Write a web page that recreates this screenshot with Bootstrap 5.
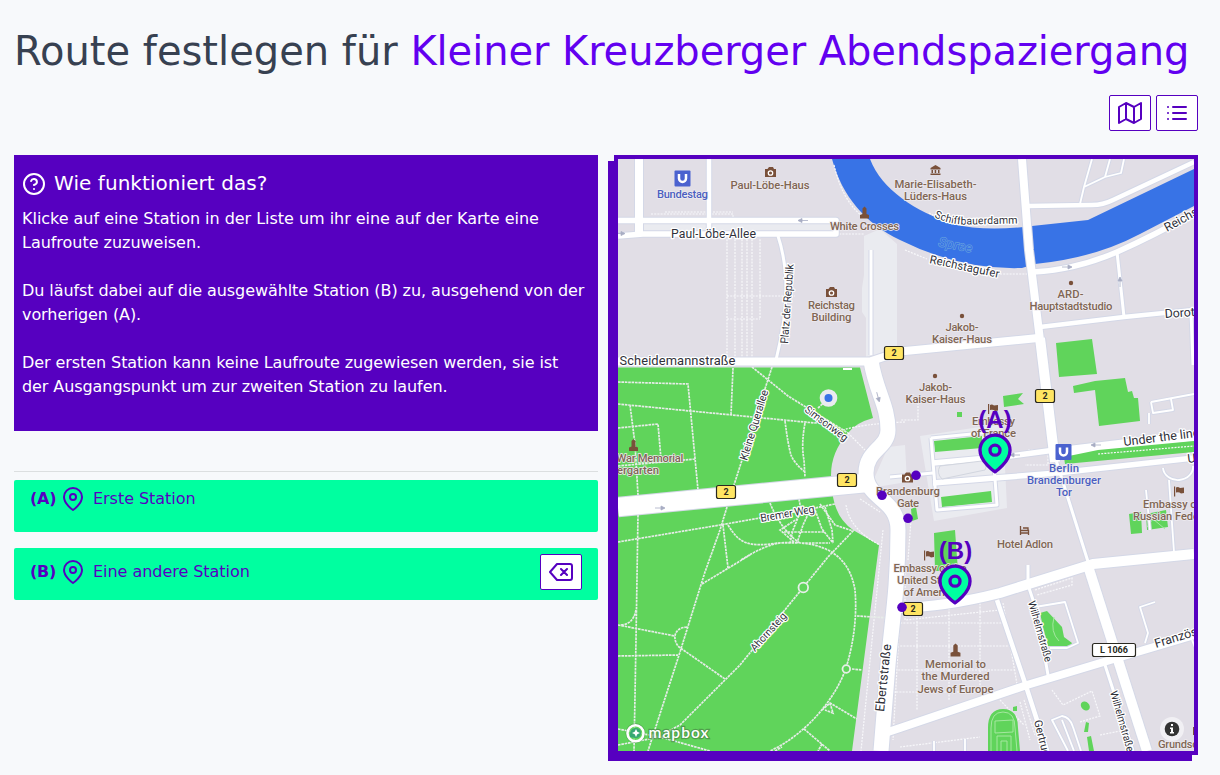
<!DOCTYPE html>
<html lang="de">
<head>
<meta charset="utf-8">
<meta name="viewport" content="width=device-width, initial-scale=1">
<title>Route festlegen</title>
<link rel="stylesheet" href="https://cdn.jsdelivr.net/npm/bootstrap@5.3.0/dist/css/bootstrap.min.css">
<style>
:root{--violet:#5600c0;--mint:#00ffa0}
body{background:#f7f9fb;font-family:"DejaVu Sans",sans-serif;color:#374151;font-size:16px;line-height:24px;min-height:100vh}
.page-wrap{padding:26px 22px 20px 14px}
h1{font-size:40px;line-height:50px;font-weight:400;white-space:nowrap;color:#374151;margin:0 0 19px}
h1 span{color:#6200f0;letter-spacing:-.08px}
.icon{width:24px;height:24px;fill:none;stroke:currentColor;stroke-width:2;stroke-linecap:round;stroke-linejoin:round;flex:none;display:block}
.icon-btn{width:42px;height:36px;border:1px solid var(--violet);border-radius:2px;color:var(--violet);background:#fff;padding:0}
.tools{gap:5px;margin-bottom:24px}
.halves{display:grid;grid-template-columns:584px 584px;gap:16px}
.help{background:var(--violet);color:#fff;height:276px;padding:16px 8px}
.help h2{font-size:20px;line-height:24px;font-weight:400;margin-bottom:11px;letter-spacing:.06px}
.help p{margin-bottom:24px;letter-spacing:-.08px}
.help p:first-of-type{letter-spacing:-.03px}
.stations{border-top:1px solid #dcdfe0;margin-top:40px;padding-top:8px}
.station{background:var(--mint);color:var(--violet);border-radius:2px;height:52px;padding:6px 16px;margin-bottom:16px}
.station b{width:27px;padding-top:1px;letter-spacing:-.2px}
.station span{padding-top:1px;letter-spacing:-.04px}
.mapframe{height:600px;border:4px solid var(--violet);box-shadow:-6px 6px 0 var(--violet);background:#e1dee6}
.mapframe>svg{display:block}
.roads path{fill:none;stroke-width:calc(var(--w) + var(--edge,0px));stroke-linejoin:round}
.w2{--w:1.8px}.w3{--w:3px}.w4{--w:4.5px}.w5{--w:5.5px}.w8{--w:8px}.w10{--w:10px}.w15{--w:15px}.w19{--w:18.5px}
.trail{fill:none;stroke:#e6ece8;stroke-width:1.7;stroke-dasharray:2.6 .8}
.foot{fill:none;stroke:#f8f8fb;stroke-width:1.2;stroke-dasharray:2 1.2}
.grass{fill:#60d45b}
text{font-family:Roboto,"Open Sans",sans-serif}
.poi text{font-size:11.3px;font-weight:500;fill:#806654;stroke:#eeebf0;stroke-width:1.4;paint-order:stroke;text-anchor:middle}
.poi .ubahn{fill:#4b5fc0}
.street text{font-size:12.3px;fill:#30313a;stroke:#fff;stroke-width:2.5;paint-order:stroke;stroke-linejoin:round}
.shield rect{fill:#ffe563;stroke:#292820;stroke-width:1.2}
.shield text{font-size:9px;font-weight:700;fill:#292820;text-anchor:middle}
.pins text{font:700 24px "Liberation Sans",sans-serif;fill:var(--violet);text-anchor:middle}
</style>
</head>
<body>
<main class="page-wrap">
<h1>Route festlegen für <span>Kleiner Kreuzberger Abendspaziergang</span></h1>
<div class="tools d-flex justify-content-end">
<button class="icon-btn d-flex align-items-center justify-content-center" aria-label="Karte"><svg class="icon" viewBox="0 0 24 24"><path d="M1 6v16l7-4 8 4 7-4V2l-7 4-8-4-7 4zM8 2v16M16 6v16"/></svg></button>
<button class="icon-btn d-flex align-items-center justify-content-center" aria-label="Liste"><svg class="icon" viewBox="0 0 24 24"><path d="M8 6h13M8 12h13M8 18h13M3 6h.01M3 12h.01M3 18h.01"/></svg></button>
</div>
<div class="halves">
<section>
<div class="help">
<h2 class="d-flex gap-2"><svg class="icon" style="margin-top:1px" viewBox="0 0 24 24"><circle cx="12" cy="12" r="10"/><path d="M9.09 9a3 3 0 0 1 5.83 1c0 2-3 3-3 3M12 17h.01"/></svg>Wie funktioniert das?</h2>
<p>Klicke auf eine Station in der Liste um ihr eine auf der Karte eine Laufroute zuzuweisen.</p>
<p>Du läufst dabei auf die ausgewählte Station (B) zu, ausgehend von der vorherigen (A).</p>
<p class="mb-0">Der ersten Station kann keine Laufroute zugewiesen werden, sie ist<br>der Ausgangspunkt um zur zweiten Station zu laufen.</p>
</div>
<div class="stations">
<div class="station d-flex align-items-start"><b class="me-1">(A)</b><svg class="icon me-2" style="margin-top:1px" viewBox="0 0 24 24"><path d="M21 10c0 7-9 13-9 13s-9-6-9-13a9 9 0 0 1 18 0z"/><circle cx="12" cy="10" r="3"/></svg><span>Erste Station</span></div>
<div class="station d-flex align-items-start"><div class="d-flex flex-fill" style="padding-top:5px"><b class="me-1">(B)</b><svg class="icon me-2" style="margin-top:1px" viewBox="0 0 24 24"><path d="M21 10c0 7-9 13-9 13s-9-6-9-13a9 9 0 0 1 18 0z"/><circle cx="12" cy="10" r="3"/></svg><span>Eine andere Station</span></div><button class="icon-btn d-flex align-items-center justify-content-center" aria-label="Route löschen"><svg class="icon" viewBox="0 0 24 24"><path d="M21 4H8l-7 8 7 8h13a2 2 0 0 0 2-2V6a2 2 0 0 0-2-2zM18 9l-6 6M12 9l6 6"/></svg></button></div>
</div>
</section>
<section class="mapframe">
<svg width="576" height="592" viewBox="618 159 576 592">
<defs>
<g id="roadnet" class="roads">
<path class="w8" d="M639 159V236"/><path class="w4" d="M709 159V234"/>
<path class="w5" d="M618 220.5H836V234H643L618 236"/>
<path class="w3" d="M778 236Q786 260 786 290T776 360M871 250V355M931 438L937 510 997 505 992 440"/>
<path class="w3" d="M931 438L992 432"/>
<path class="w8" d="M618 361.5H870L900 351.500 1038 338"/>
<path class="w8" d="M1022 159L1029 250 1040 340"/><path class="w10" d="M1040 338L1055 462"/>
<path class="w3" d="M1056 460L1090 568M1117 252L1124 317M1191 312L1193 365"/>
<path class="w4" d="M1028 206L1092 205Q1103 205 1113 200L1194 162"/>
<path class="w2" d="M1092 159L1084 187 1080 204M1084 187L1105 177 1121 173 1124 159M1110 159L1105 177"/>
<path class="w5" d="M1033 272Q1075 270 1117 252 1155 235 1194 213"/>
<path class="w4" d="M1040 327L1124 317 1194 310"/>
<path class="w5" d="M933 463L1010 456 1055 450M933 483L995 478 1057 473 1194 458"/>
<path class="w10" d="M1052 453L1194 436"/>
<path class="w19" d="M618 507L866 483"/>
<path class="w15" d="M871 361C876 392 888 405 888 430 888 448 866 450 866 473 866 500 898 498 898 530 898 590 892 620 888 665L881 751"/>
<path class="w10" d="M898 608Q945 607 1000 593L1093 564 1194 554"/>
<path class="w10" d="M1088 566L1147 751"/><path class="w8" d="M885 733L900 728 1027 685 1117 658 1194 635"/>
<path class="w4" d="M997 600L1025 683 1047 751"/>
<path class="w3" d="M1028 565V585L1037 612 1048 675M1105 665L1133 751M933 473L890 477"/>
<path class="w2" d="M1035 607L1065 602 1078 643 1067 648H1050M1155 602L1140 607 1148 633 1145 643M1068 751L1052 720 1062 716Q1070 717 1073 727L1081 751M1062 720L1074 751M1192 640L1196 650M1151 402L1194 394M1151 402L1153 413 1173 410 1171 399M1149 424V413M1163 468A15 13 0 0 0 1193 466M1146 490L1150 530M1169 480L1174 552M934 741V751M965 739V751"/>
</g>
<g id="camera" fill="#79503a"><path d="M-5.500-3h2.500l1.500-2h4l1 2h2v8h-11z"/><circle r="2.200" cy="1" fill="#79503a" stroke="#fff" stroke-width="1.300"/></g>
<path id="monument" fill="#79503a" d="M-4.500 6V2.500l2.500-1V-4L0-6 2-4v5.500l2.500 1V6z"/>
<path id="flag" fill="#79503a" d="M-5-5h1.200v10H-5zM-3-4Q-1-5 1-3.500L5-4V1.500L2 2Q0 0-3 1z"/>
<g id="ub"><rect x="-8" y="-8" width="16" height="16" rx="1" fill="#4b62cf"/><path d="M-3.500-4.500V0a3.500 3.500 0 0 0 7 0V-4.500" fill="none" stroke="#fff" stroke-width="2.500"/></g>
<path id="arr" d="M-5 0H4M1-2L5 0 1 2z" fill="#a8adc4" stroke="#a8adc4" stroke-width=".8"/>
<path id="quay" d="M934 217Q950 225 968 224.500L1016 223.500"/>
<g id="pin"><path d="M21 10c0 7-9 13-9 13s-9-6-9-13a9 9 0 0 1 18 0z" fill="#00ffa0" stroke="#5600c0" stroke-width="2" stroke-linejoin="round"/><circle cx="12" cy="10" r="3" fill="none" stroke="#5600c0" stroke-width="2"/></g>
</defs>
<!-- ground areas -->
<path fill="#eaebf0" d="M643 222H836V232H643zM864 236L880 229 897 244V350L866 357V318L862 312V288L864 275zM920 436L980 427 1003 425 1007 508 934 521 928 485zM888 447L905 445 907 482 870 488z"/>
<path fill="#3873e6" d="M832 159C842 196 865 223 900 240Q960 270 1022 268L1035 264Q1095 258 1140 234L1194 206V169L1088 220 1032 226Q985 232 953 224C915 211 882 190 870 159z"/>
<path class="grass" d="M618 367.500H860L873 418Q855 423 848 433 831 452 831 475L833 497Q837 519 853 530L879 545 852 751H618z"/>
<g class="foot"><path d="M651 214H733V223M665 212H733M727 236V361M735 236V361M742 236V361M747 236V361M752 236V361M760 236V319M727 296H795M727 319H760M836 234H864M834 165Q842 200 862 216M905 250L927 259M929 213Q960 229 1020 222M1000 274H1030M848 433L865 450M843 430Q862 424 905 422M860 499L880 512M846 505Q850 530 880 545M883 530L861 751M903 560L893 740M905 570V620L1000 610M897 623H1008M897 646H1010M895 670H1015M893 692H1018M917 605V710M949 605V700M980 600V690M1003 603L1018 690M1035 590L1072 578V585L1037 595M1052 690L1063 705 1092 691 1100 716 1080 722M900 747L980 737M1000 700L1024 725M908 400H918V420H900M1028 450H1048V465H1025M911 520L908 560M1020 702L1030 740M1024 700L1035 735M1100 735L1125 730 1130 751"/></g>
<g class="grass"><path d="M934 441L982 436V448L935 452zM941 497L991 491 992 502 942 507zM1056 343L1092 339 1097 374 1059 377zM1073 386L1095 381 1125 378 1128 392 1132 391 1134 398 1138 398 1140 421 1099 426 1095 390 1074 393zM1003 396L1023 393 1018 399 1024 404 1004 407zM957 412h5v5h-5zM1129 514L1141 512 1142 533 1131 534zM1146 514L1166 510 1168 527 1147 530zM934 533L955 530 958 571 935 571zM911 509L916 507 918 519 912 521zM1040 613L1047 611 1062 627 1064 637 1072 643 1070 647 1048 646 1043 627zM1013 707L1017 706V711L1013 711zM1086 722L1089 723 1088 732 1084 732zM1087 737L1091 736 1094 751H1089z"/><ellipse cx="1085.300" cy="706" rx="5" ry="4" transform="rotate(45 1085.300 706)"/><path d="M988 751V728Q988 709 1003 709T1018 728L1020 751z"/></g>
<path d="M991 751V728Q991 712 1003 712T1015 728L1017 751M995 721L1013 720V732L995 733zM997 751V736H1011V751M1001 751V741H1007V751M1054 617Q1050 632 1059 641M1147 527L1153 519 1165 529" fill="none" stroke="#a5e7a0"/>
<g class="trail"><path d="M618 382L688 384 698 490M618 404L732 415 815 423 828 420M733 368L731 415M630 405L635 444 638 495M618 428L658 424 661 459M618 466L695 459M772 367L734 485M752 367L788 396 848 433M785 421Q788 445 791 455 794 463 805 472M805 423Q801 445 804 460L805 477M818 408L828 399M638 515L636 640 634 751M618 542L720 525 805 510 835 504M727 507L720 530 705 572 680 652 648 751M723 525L728 568M728 525C740 545 750 547 778 543 830 539 850 560 855 590 858 625 850 655 846 668 835 700 805 735 770 751M741 560Q765 545 780 543H830M770 503C778 523 790 537 800 543M799 499L801 510 793 530 790 543M825 507L832 530 833 543M820 504L835 525 853 531 828 557 740 665 680 725 665 733M784 532H825M794 542L780 530 797 519M814 507L822 529 833 543M702 584L750 555M618 625L675 636M618 656L678 655M636 610Q633 625 620 625M687 627C672 628 673 641 679 647L725 679M618 729L660 737 710 751M618 745L665 736M822 710L830 703 857 719M830 703L833 713 825 710M804 729L830 751M822 744L818 751M857 616L890 618M852 669L862 670M810 510L803 525 797 543M775 751L782 747"/></g>
<g class="grass" stroke="#e7efe9" stroke-width="1.800"><circle cx="803.300" cy="587.500" r="4.800"/><circle cx="846.300" cy="669" r="3.800"/></g>
<!-- street network, casing below the white surface -->
<use href="#roadnet" stroke="#d4d8e7" style="--edge:2px"/><use href="#roadnet" stroke="#fff"/>
<path d="M940 466L982 461Q988 464 985 470L942 479Q936 473 940 466z" fill="#eaebf0" stroke="#d2d6df"/>
<path class="grass" d="M1064 457L1098 450 1194 441V452L1065 464z"/><path class="foot" d="M1098 454L1194 446"/>
<g><use href="#arr" transform="translate(803 220.500) rotate(180)"/><use href="#arr" x="620" y="233.500"/><use href="#arr" x="660" y="508"/><use href="#arr" x="1067" y="267"/><use href="#arr" transform="translate(1120 282) rotate(-90)"/><use href="#arr" transform="translate(878 397) rotate(75)"/><use href="#arr" transform="translate(1096 445) rotate(180)"/><use href="#arr" transform="translate(1015 455) rotate(180)"/></g>
<circle cx="828.500" cy="398" r="8.800" fill="#eaebf0"/><circle cx="828.500" cy="398" r="4" fill="#3873e6"/>
<path fill="#fff" d="M843 368h9v2h-9z"/>
<!-- places -->
<g class="poi">
<use href="#ub" x="682.500" y="178.500"/><text class="ubahn" x="682.500" y="197.500" textLength="51">Bundestag</text>
<use href="#camera" x="770.500" y="172"/><text x="770" y="188.500" textLength="79">Paul-Löbe-Haus</text>
<use href="#monument" x="864.500" y="212.500"/><text x="864.500" y="230" textLength="69">White Crosses</text>
<path fill="#79503a" d="M930.500 168l5-3 5 3v1.500h-10zM931.500 170h1.500v3h-1.500zM934.700 170h1.500v3h-1.500zM938 170h1.500v3H938zM930.500 173.500h10v1.500h-10z"/><text x="935.500" y="187.500" textLength="82">Marie-Elisabeth-</text><text x="935.500" y="199.500" textLength="63">Lüders-Haus</text>
<use href="#camera" x="831.500" y="292"/><text x="831.500" y="309" textLength="47">Reichstag</text><text x="831.500" y="321" textLength="40">Building</text>
<circle cx="962" cy="316" r="2.200" fill="#79503a"/><text x="962" y="331" textLength="33">Jakob-</text><text x="962" y="343" textLength="60">Kaiser-Haus</text>
<circle cx="935" cy="376" r="2.200" fill="#79503a"/><text x="935.500" y="391" textLength="33">Jakob-</text><text x="935.500" y="403" textLength="60">Kaiser-Haus</text>
<circle cx="1071" cy="283" r="2.200" fill="#79503a"/><text x="1070.500" y="298" textLength="26">ARD-</text><text x="1071" y="310" textLength="83">Hauptstadtstudio</text>
<use href="#monument" x="633.500" y="445"/><text x="650" y="462" textLength="67">War Memorial</text><text x="638" y="474" textLength="42">ergarten</text>
<use href="#flag" x="993" y="409"/><text x="993.500" y="425" textLength="43">Embassy</text><text x="993.500" y="437" textLength="45">of France</text>
<use href="#camera" x="907.500" y="477.500"/><text x="908" y="495" textLength="64">Brandenburg</text><text x="908" y="507" textLength="22">Gate</text>
<use href="#ub" x="1063.500" y="452"/><text class="ubahn" x="1064" y="471.500" textLength="30">Berlin</text><text class="ubahn" x="1064" y="483.500" textLength="74">Brandenburger</text><text class="ubahn" x="1064" y="495.500" textLength="16">Tor</text>
<use href="#flag" x="1179" y="491.500"/><text x="1143" y="508" style="text-anchor:start;font-size:11px">Embassy of</text><text x="1133" y="520" style="text-anchor:start;font-size:11px">Russian Feder</text>
<path d="M1020.500 526v9M1020.500 533h8v2M1020.500 530.500h8v3M1023 528h5v2" fill="none" stroke="#79503a" stroke-width="1.300"/><text x="1025" y="547.500" textLength="56">Hotel Adlon</text>
<use href="#flag" x="929" y="555.500"/><text x="930" y="571.500" textLength="73">Embassy of the</text><text x="929" y="584" textLength="64">United States</text><text x="930" y="596" textLength="53">of America</text>
<use href="#monument" transform="translate(955.500 650) scale(1.100)"/><text x="955.500" y="667.500" textLength="61">Memorial to</text><text x="955.500" y="680" textLength="68">the Murdered</text><text x="955.500" y="692.500" textLength="76">Jews of Europe</text>
<text x="1158" y="748" style="text-anchor:start" textLength="60">Grundschule</text><path d="M1193 727h1v8h-1z" fill="#79503a"/>
</g>
<g class="street">
<text x="671" y="238" textLength="85">Paul-Löbe-Allee</text><text x="619.500" y="365" textLength="116" style="font-size:13px">Scheidemannstraße</text>
<text transform="translate(788 344) rotate(-86)" textLength="80" style="font-size:11px">Platz der Republik</text>
<text style="font-size:10.600px"><textPath href="#quay">Schiffbauerdamm</textPath></text>
<text transform="translate(929 263) rotate(12)" textLength="71" style="font-size:11.500px">Reichstagufer</text>
<text transform="translate(1167 232) rotate(-29)">Reichstagufer</text><text transform="translate(1165 318) rotate(-4)">Dorotheenstraße</text>
<text transform="translate(747 461) rotate(-73)" textLength="73" style="font-size:11px">Kleine Querallee</text>
<text transform="translate(804 411) rotate(37)" textLength="51" style="font-size:10.500px">Simsonweg</text>
<text transform="translate(761 522) rotate(-10)" textLength="55" style="font-size:11px">Bremer Weg</text>
<text transform="translate(755 652) rotate(-48)" textLength="48" style="font-size:10.500px">Ahornsteig</text>
<text transform="translate(884 712) rotate(-84)" textLength="68" style="font-size:12.800px">Ebertstraße</text>
<text transform="translate(1124 446) rotate(-7)" style="font-size:12.500px">Under the linden</text><text transform="translate(1188 463) rotate(-7)">Unter</text>
<text transform="translate(1028 602) rotate(74)" textLength="63" style="font-size:10.500px">Wilhelmstraße</text>
<text transform="translate(1110 692) rotate(74)" textLength="63" style="font-size:10.500px">Wilhelmstraße</text>
<text transform="translate(1034 721) rotate(76)" style="font-size:11px">Gertrud-Kolmar</text><text transform="translate(1156 648) rotate(-17)" style="font-size:12.500px">Französische</text>
</g>
<text transform="translate(938 246) rotate(11)" textLength="34" font-size="13" font-style="italic" fill="#3873e6" stroke="#64a0df" stroke-width="1.300" paint-order="stroke">Spree</text>
<g class="shield"><rect x="884.500" y="346.500" width="19" height="13" rx="2"/><text x="894" y="356.200">2</text><rect x="1035.500" y="389.500" width="19" height="13" rx="2"/><text x="1045" y="399.200">2</text><rect x="716.500" y="485.500" width="19" height="13" rx="2"/><text x="726" y="495.200">2</text><rect x="837.500" y="473.500" width="19" height="13" rx="2"/><text x="847" y="483.200">2</text><rect x="903.500" y="602.500" width="19" height="13" rx="2"/><text x="913" y="612.200">2</text><rect x="1092.500" y="643.500" width="43" height="13" rx="2" style="fill:#fff"/><text x="1114" y="653.300" textLength="28">L 1066</text></g>
<!-- route points and station pins -->
<g fill="#5600c0"><circle cx="916" cy="475.300" r="4.800"/><circle cx="882" cy="495.300" r="4.800"/><circle cx="908" cy="518.300" r="4.800"/><circle cx="902" cy="607.300" r="4.800"/></g>
<g class="pins"><use href="#pin" transform="translate(975 433.500) scale(1.667)"/><text x="995" y="428">(A)</text><use href="#pin" transform="translate(935 564.500) scale(1.667)"/><text x="955.500" y="559">(B)</text></g>
<!-- map provider mark and attribution -->
<circle cx="635.500" cy="733.300" r="8.500" fill="#60d45b" stroke="#4b8d49" stroke-width="3" opacity=".6"/><circle cx="635.500" cy="733.300" r="8" fill="none" stroke="#fff" stroke-width="2.600"/><path d="M630 737q-1-8 5-9 6 0 6 5t-6 5z" fill="#37a873"/><path d="M636 729l1.300 2.700L640 733l-2.700 1.300L636 737l-1.300-2.700L632 733l2.700-1.300z" fill="#fff"/>
<text x="648.500" y="737.500" textLength="60" style="font:600 15.500px Lato,sans-serif;fill:#fff;stroke:#4b8d49;stroke-opacity:.75;stroke-width:2.500;paint-order:stroke">mapbox</text>
<circle cx="1172" cy="729" r="12" fill="#f1f0f4"/><circle cx="1172" cy="729" r="7.300" fill="#333"/><path d="M1171 724h2v2h-2zM1170 727.500h3v4.500h1v1.500h-4V732h1v-3h-1z" fill="#fff"/>
</svg>
</section>
</div>
</main>
<script src="https://cdn.jsdelivr.net/npm/bootstrap@5.3.0/dist/js/bootstrap.bundle.min.js"></script>
</body>
</html>
